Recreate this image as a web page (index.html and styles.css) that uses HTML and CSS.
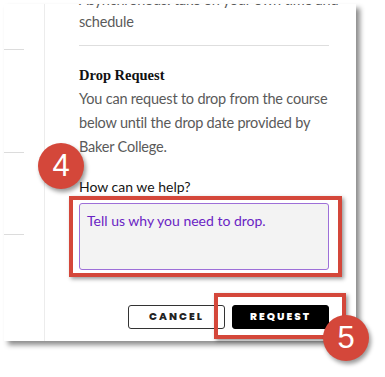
FILE: index.html
```html
<!DOCTYPE html>
<html>
<head>
<meta charset="utf-8">
<link rel="stylesheet" href="styles.css">
</head>
<body>
<div class="stage">
  <div class="shot">
    <div class="strip">
      <div class="strip-line l1"></div>
      <div class="strip-line l2"></div>
      <div class="strip-line l3"></div>
    </div>
    <div class="modal">
      <p class="para top">Asynchronous: take on your own time and<br>schedule</p>
      <hr class="divider">
      <h3 class="title">Drop Request</h3>
      <p class="para">You can request to drop from the course below until the drop date provided by Baker College.</p>
      <label class="label">How can we help?</label>
      <div class="textarea">Tell us why you need to drop.</div>
      <div class="actions">
        <button class="btn cancel">CANCEL</button>
        <button class="btn request">REQUEST</button>
      </div>
    </div>
  </div>
  <div class="hl hl-text"></div>
  <div class="hl hl-btn"></div>
  <div class="badge b4">4</div>
  <div class="badge b5">5</div>
</div>
</body>
</html>
```

FILE: styles.css
```css
html, body {
  margin: 0;
  padding: 0;
  background: #ffffff;
}
.stage {
  position: relative;
  width: 385px;
  height: 377px;
  overflow: hidden;
}
.shot {
  margin: 4px 0 0 4px;
  width: 352px;
  height: 337px;
  background: #fff;
  display: flex;
  overflow: hidden;
  box-shadow: 4px 4px 5px rgba(0,0,0,0.45);
}
.strip {
  width: 40px;
  flex: none;
  border-right: 1px solid #ececec;
  display: flex;
  flex-direction: column;
}
.strip-line {
  width: 20px;
  height: 1px;
  background: #dcdcdc;
}
.l1 { margin-top: 45px; }
.l2 { margin-top: 102px; }
.l3 { margin-top: 81px; }
.modal {
  flex: 1;
  min-width: 0;
  padding: 0 27px 0 34px;
  display: flex;
  flex-direction: column;
}
.para {
  margin: 0;
  font-family: Lato, "Open Sans", sans-serif;
  font-size: 14.5px;
  letter-spacing: -0.2px;
  line-height: 24px;
  color: #5a5a5a;
}
.para.top {
  margin-top: -15px;
  line-height: 22px;
  white-space: nowrap;
}
.divider {
  border: 0;
  height: 1px;
  background: #dedede;
  margin: 12px 0 0 0;
}
.title {
  margin: 19px 0 0 0;
  font-family: "Liberation Serif", serif;
  font-weight: bold;
  font-size: 14.5px;
  line-height: 20px;
  color: #111;
}
.title + .para {
  margin-top: 2px;
}
.label {
  margin-top: 18px;
  font-family: Lato, "Open Sans", sans-serif;
  font-size: 14px;
  line-height: 20px;
  color: #151515;
}
.textarea {
  margin-top: 6px;
  height: 67px;
  box-sizing: border-box;
  border: 1px solid #9d6fd8;
  border-radius: 3px;
  background: #f3f3f3;
  padding: 7px 7px;
  font-family: Lato, "Open Sans", sans-serif;
  font-size: 14px;
  line-height: 20px;
  color: #6a24c4;
}
.actions {
  margin-top: 35px;
  display: flex;
  justify-content: flex-end;
  gap: 7px;
}
.btn {
  width: 97px;
  height: 24px;
  box-sizing: border-box;
  border-radius: 3px;
  font-family: Poppins, Inter, "Noto Sans", sans-serif;
  font-weight: 800;
  font-size: 10.5px;
  letter-spacing: 2px;
  padding: 0;
}
.cancel {
  background: #fff;
  color: #222;
  border: 1px solid #333;
}
.request {
  background: #000;
  color: #fff;
  border: 1px solid #000;
}
.hl {
  position: absolute;
  box-sizing: border-box;
  border: 4px solid #d4473a;
  box-shadow: 2px 2px 4px rgba(0,0,0,0.4);
}
.hl-text {
  left: 69px;
  top: 196px;
  width: 273px;
  height: 81px;
}
.hl-btn {
  left: 214px;
  top: 293px;
  width: 132px;
  height: 46px;
}
.badge {
  position: absolute;
  width: 46px;
  height: 46px;
  border-radius: 50%;
  background: #d4473a;
  color: #fff;
  font-family: "Liberation Sans", Arial, sans-serif;
  font-size: 31px;
  line-height: 46px;
  text-align: center;
  box-shadow: 2px 3px 4px rgba(0,0,0,0.4);
}
.b4 {
  left: 38px;
  top: 143px;
}
.b5 {
  left: 323px;
  top: 315px;
}
```
